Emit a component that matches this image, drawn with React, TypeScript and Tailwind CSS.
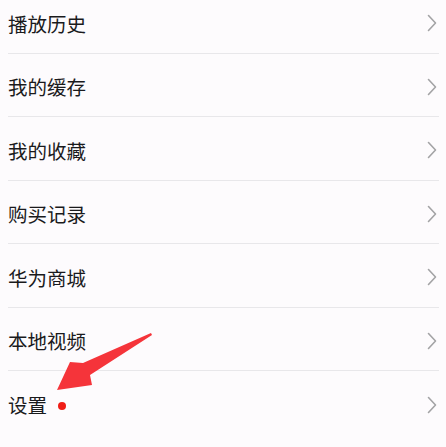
import React from 'react';

const items = ['播放历史', '我的缓存', '我的收藏', '购买记录', '华为商城', '本地视频', '设置'];

const Chevron: React.FC = () => (
    <svg width="10" height="18" viewBox="0 0 10 18" className="shrink-0">
        <polyline
            points="1.5,1.5 8.5,9 1.5,16.5"
            fill="none"
            stroke="#a3a3a5"
            strokeWidth="1.6"
            strokeLinecap="round"
            strokeLinejoin="round"
        />
    </svg>
);

const App: React.FC = () => {
    return (
        <div
            className="relative w-[446px] h-[447px] overflow-hidden bg-[#fdfbfd]"
            style={{ fontFamily: '"Noto Sans CJK SC", "Noto Sans", sans-serif' }}
        >
            <ul className="mt-[-10px] ml-2 mr-[7px]">
                {items.map((label, i) => (
                    <li
                        key={label}
                        className={`flex items-center justify-between h-[63.5px] pt-[4px] pr-[2px] ${
                            i < items.length - 1 ? 'border-b border-[#e8e7ea]' : ''
                        }`}
                    >
                        <div className="flex items-center">
                            <span className="text-[19.5px] leading-none text-[#1a1a1c]">{label}</span>
                            {label === '设置' && (
                                <span className="ml-[11px] mt-[2px] w-[8px] h-[8px] rounded-full bg-[#f01d16]" />
                            )}
                        </div>
                        <Chevron />
                    </li>
                ))}
            </ul>

            {/* annotation arrow */}
            <svg className="absolute left-0 top-0 pointer-events-none" width="446" height="447">
                <polygon
                    points="151,333 83,363 70,362 57,390 92,385 90,375 152,335"
                    fill="#f5343a"
                    strokeLinejoin="round"
                />
            </svg>
        </div>
    );
};

export default App;
